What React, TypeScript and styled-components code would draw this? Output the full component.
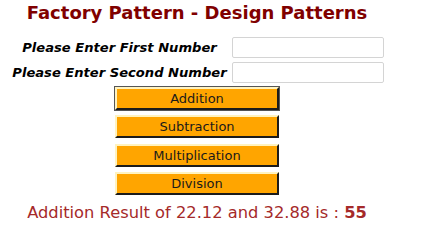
import styled, { createGlobalStyle } from "styled-components";

const GlobalStyle = createGlobalStyle`
  body {
    margin: 0;
    background: #ffffff;
    font-family: "DejaVu Sans", Verdana, sans-serif;
  }
`;

const Page = styled.div`
  width: 378px;
  margin: 0 8px;
  display: flex;
  flex-direction: column;
  align-items: center;
`;

const Title = styled.h1`
  margin: 2px 0 11px;
  font-size: 18px;
  font-weight: bold;
  color: #800000;
  white-space: nowrap;
`;

const Form = styled.table`
  border-collapse: separate;
  border-spacing: 3px 2px;
  margin-left: 2px;
`;

const Label = styled.th`
  font-size: 13.1px;
  font-style: italic;
  font-weight: bold;
  color: #000;
  text-align: center;
  padding: 0 1px;
  white-space: nowrap;
`;

const Input = styled.input`
  width: 152px;
  height: 21px;
  box-sizing: border-box;
  border: 1px solid #d4d4d4;
  border-radius: 2px;
  margin: 0;
  display: block;
`;

const Buttons = styled.div`
  display: flex;
  flex-direction: column;
  align-items: center;
  gap: 5.3px;
  margin-top: 1px;
`;

const OpButton = styled.button<{ $focused?: boolean }>`
  width: 164px;
  height: 23px;
  box-sizing: border-box;
  background: #ffa500;
  color: #1a1a1a;
  font-family: "DejaVu Sans", Verdana, sans-serif;
  font-size: 13px;
  border: 2px outset #fff3c0;
  border-right-color: #707070;
  border-bottom-color: #707070;
  padding: 0;
  ${(p) => (p.$focused ? "outline: 1px solid #555; outline-offset: 0;" : "")}
`;

const Result = styled.div`
  margin-top: 8px;
  font-size: 16.3px;
  color: #a52a2a;
  white-space: nowrap;

  b {
    font-weight: bold;
  }
`;

export default function App() {
  return (
    <>
      <GlobalStyle />
      <Page>
        <Title>Factory Pattern - Design Patterns</Title>
        <Form>
          <tbody>
            <tr>
              <Label>Please Enter First Number</Label>
              <td>
                <Input type="text" />
              </td>
            </tr>
            <tr>
              <Label>Please Enter Second Number</Label>
              <td>
                <Input type="text" />
              </td>
            </tr>
          </tbody>
        </Form>
        <Buttons>
          <OpButton $focused>Addition</OpButton>
          <OpButton>Subtraction</OpButton>
          <OpButton>Multiplication</OpButton>
          <OpButton>Division</OpButton>
        </Buttons>
        <Result>
          Addition Result of 22.12 and 32.88 is : <b>55</b>
        </Result>
      </Page>
    </>
  );
}
